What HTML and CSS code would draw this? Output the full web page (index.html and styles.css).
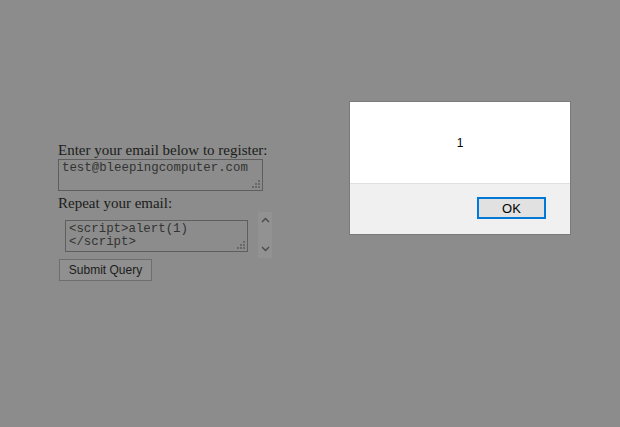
FILE: index.html
```html
<!DOCTYPE html>
<html lang="en">
<head>
  <meta charset="UTF-8" />
  <title>Register</title>
  <link rel="stylesheet" href="styles.css">
</head>
<body>
  <form class="register">
    <label class="field-label" for="email">Enter your email below to register:</label>
    <span class="box email-wrap">
      <textarea id="email" class="email-box" rows="2">test@bleepingcomputer.com</textarea>
    </span>
    <label class="field-label" for="repeat">Repeat your email:</label>
    <div class="repeat-row">
      <span class="box repeat-wrap">
        <textarea id="repeat" class="repeat-box" rows="2">&lt;script&gt;alert(1)
&lt;/script&gt;</textarea>
      </span>
      <div class="spinner">
        <svg width="9" height="6" viewBox="0 0 9 6"><path d="M1 5 L4.5 1.5 L8 5" fill="none" stroke="#4a4a4a" stroke-width="1.4"/></svg>
        <svg width="9" height="6" viewBox="0 0 9 6"><path d="M1 1 L4.5 4.5 L8 1" fill="none" stroke="#4a4a4a" stroke-width="1.4"/></svg>
      </div>
    </div>
    <button type="button" class="submit">Submit Query</button>
  </form>

  <div class="dialog">
    <div class="dialog-body">1</div>
    <div class="dialog-footer">
      <button type="button" class="ok">OK</button>
    </div>
  </div>
</body>
</html>
```

FILE: styles.css
```css
body {
  margin: 0;
  height: 427px;
  background: #8b8c8b;
  color: #1c1c1c;
  font-family: 'Liberation Serif', serif;
  overflow: hidden;
}

.register {
  display: flex;
  flex-direction: column;
  align-items: flex-start;
  padding: 141px 0 0 58px;
}

.field-label {
  font-size: 15px;
  line-height: 18px;
}

.box {
  position: relative;
  display: block;
}

/* dotted resize grip */
.box::after {
  content: "";
  position: absolute;
  right: 3px;
  bottom: 3px;
  width: 2px;
  height: 2px;
  background: #686868;
  box-shadow: -3px 0 #686868, -6px 0 #686868, 0 -3px #686868, -3px -3px #686868, 0 -6px #686868;
}

textarea {
  display: block;
  margin: 0;
  box-sizing: border-box;
  resize: none;
  background: #8b8c8b;
  color: #333;
  border: 1px solid #5e5e5e;
  font-family: 'Liberation Mono', monospace;
  font-size: 12.4px;
  line-height: 13px;
  padding: 2px 3px;
  overflow: hidden;
}

.email-wrap {
  margin-bottom: 3px;
}

.email-box {
  width: 205px;
  height: 32px;
}

.repeat-row {
  display: flex;
  align-items: flex-start;
}

.repeat-wrap {
  margin: 8px 0 0 7px;
}

.repeat-box {
  width: 183px;
  height: 32px;
}

.spinner {
  width: 14px;
  height: 46px;
  margin-left: 10px;
  padding: 5px 0 6px;
  box-sizing: border-box;
  background: #919291;
  display: flex;
  flex-direction: column;
  justify-content: space-between;
  align-items: center;
}

.submit {
  margin: 1px 0 0 1px;
  width: 93px;
  height: 22px;
  padding: 0;
  background: #8f908f;
  border: 1px solid #6e6e6e;
  color: #1c1c1c;
  font-family: 'Liberation Sans', sans-serif;
  font-size: 12px;
}

.dialog {
  position: absolute;
  left: 349px;
  top: 101px;
  width: 220px;
  background: #fff;
  border: 1px solid #7a7a7a;
  font-family: 'Liberation Sans', sans-serif;
  color: #000;
}

.dialog-body {
  height: 81px;
  display: flex;
  align-items: center;
  justify-content: center;
  font-size: 12px;
  border-bottom: 1px solid #dfdfdf;
}

.dialog-footer {
  height: 50px;
  background: #f0f0f0;
  display: flex;
  justify-content: flex-end;
  align-items: flex-start;
  padding: 13px 24px 0 0;
  box-sizing: border-box;
}

.ok {
  width: 69px;
  height: 22px;
  padding: 0;
  background: #e1e1e1;
  border: 2px solid #0078d7;
  font-family: 'Liberation Sans', sans-serif;
  font-size: 13px;
  color: #000;
}
```
